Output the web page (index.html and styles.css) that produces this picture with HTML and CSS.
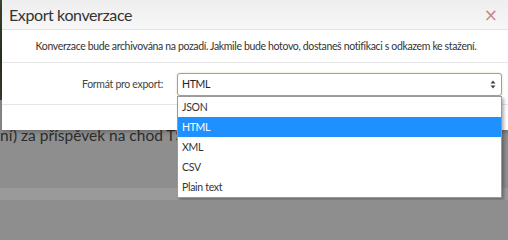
FILE: index.html
```html
<!DOCTYPE html>
<html lang="cs">
<head>
<meta charset="utf-8">
<title>Export konverzace</title>
<link rel="stylesheet" href="styles.css">
</head>
<body>
<div class="page">
  <div class="page-strip"></div>
  <p class="page-text">ní) za příspěvek na chod TS</p>
  <div class="page-band"></div>
</div>

<div class="modal">
  <div class="modal-header">
    <h2 class="modal-title">Export konverzace</h2>
    <span class="modal-close">&times;</span>
  </div>
  <div class="modal-info">Konverzace bude archivována na pozadí. Jakmile bude hotovo, dostaneš notifikaci s odkazem ke stažení.</div>
  <div class="modal-form">
    <label class="form-label">Formát pro export:</label>
    <div class="select-wrap">
      <div class="select">
        <span>HTML</span>
        <svg class="select-arrows" width="6" height="9" viewBox="0 0 6 9"><path d="M3 0.5 L5.5 3.5 H0.5 Z M3 8.5 L5.5 5.5 H0.5 Z" fill="#444"/></svg>
      </div>
      <ul class="dropdown">
        <li>JSON</li>
        <li class="active">HTML</li>
        <li>XML</li>
        <li>CSV</li>
        <li>Plain text</li>
      </ul>
    </div>
  </div>
  <div class="modal-footer"></div>
</div>
</body>
</html>
```

FILE: styles.css
```css
* { box-sizing: border-box; }
html, body { margin: 0; padding: 0; }
body {
  width: 508px;
  height: 200px;
  overflow: hidden;
  background: #8e8e8e;
  font-family: Lato, "Open Sans", sans-serif;
  position: relative;
}
.page {
  height: 200px;
  display: flex;
  flex-direction: column;
}
.page-strip {
  position: absolute;
  left: 0; top: 0;
  width: 3px; height: 100px;
  background: linear-gradient(#3c4a30, #28331f 60%, #3a3f34);
}
.page-text {
  margin: 0;
  padding: 126px 0 0 0;
  font-size: 15.5px;
  line-height: 18px;
  color: #2c2c2c;
  white-space: nowrap;
}
.page-band {
  margin-top: auto;
  height: 12px;
  background: #9a9a9a;
}
.modal {
  position: absolute;
  left: 2px;
  top: 0;
  width: 508px;
  height: 130px;
  background: #fff;
  box-shadow: 0 2px 4px rgba(0,0,0,0.25);
  display: flex;
  flex-direction: column;
}
.modal-header {
  height: 30px;
  display: flex;
  align-items: center;
  justify-content: space-between;
  padding: 0 12px 0 7px;
  background: linear-gradient(#eeeeee, #f7f7f7);
  border-bottom: 1px solid #e3e3e3;
}
.modal-title {
  margin: 0;
  font-size: 16px;
  letter-spacing: -0.4px;
  font-weight: normal;
  color: #333;
  line-height: 20px;
}
.modal-close {
  font-size: 17px;
  line-height: 20px;
  color: #c9888a;
  font-family: "DejaVu Sans", sans-serif;
}
.modal-info {
  height: 33px;
  display: flex;
  align-items: center;
  justify-content: center;
  font-size: 10.5px;
  letter-spacing: -0.35px;
  color: #333;
  border-bottom: 1px solid #e6e6e6;
  white-space: nowrap;
}
.modal-form {
  height: 41px;
  display: flex;
  align-items: center;
  padding-top: 1px;
}
.form-label {
  width: 161px;
  text-align: right;
  font-size: 10.5px;
  letter-spacing: -0.3px;
  color: #444;
}
.select-wrap {
  position: relative;
  margin-left: 14px;
  width: 325px;
}
.select {
  height: 23px;
  border: 1px solid #a8a27f;
  border-radius: 3px;
  box-shadow: 0 0 2px rgba(170,160,90,0.45);
  display: flex;
  align-items: center;
  justify-content: space-between;
  padding: 0 5px 0 4px;
  font-size: 10.5px;
  letter-spacing: -0.3px;
  color: #222;
  background: #fff;
}
.select-arrows { display: block; }
.dropdown {
  position: absolute;
  left: 0;
  top: 23px;
  width: 325px;
  margin: 0;
  padding: 0;
  list-style: none;
  background: #fff;
  border: 1px solid #9a9a9a;
  box-shadow: 2px 2px 3px rgba(0,0,0,0.3);
  z-index: 2;
}
.dropdown li {
  height: 20px;
  line-height: 20px;
  padding-left: 4px;
  font-size: 10.5px;
  letter-spacing: -0.3px;
  color: #333;
}
.dropdown li.active {
  background: #1e90ff;
  color: #fff;
}
.modal-footer {
  flex: 1;
  border-top: 1px solid #e6e6e6;
}
```
